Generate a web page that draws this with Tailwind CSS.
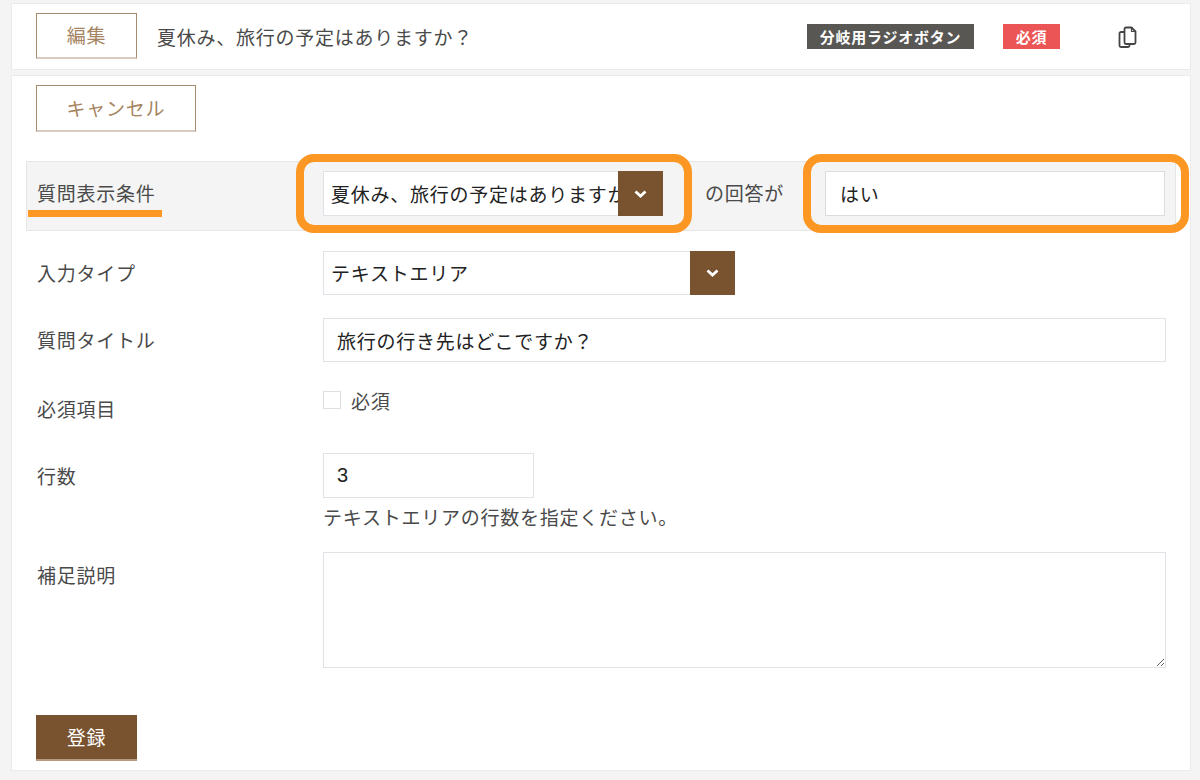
<!DOCTYPE html>
<html lang="ja">

<head>
    <meta charset="UTF-8">
    <meta name="viewport" content="width=device-width, initial-scale=1.0">
    <title>質問編集</title>
    <script src="https://cdn.jsdelivr.net/npm/@tailwindcss/browser@4"></script>
</head>

<body class="bg-[#f4f4f4] h-[780px] overflow-hidden font-['Noto_Sans_CJK_JP','Liberation_Sans',sans-serif] text-[19px] leading-[26px] tracking-[0.75px] text-[#4a4a4a]">
    <div class="relative w-[1200px] h-[780px] pl-[11px] pt-[3px]">
        <!-- question header -->
        <div class="w-[1180px] h-[67px] bg-white border border-[#ebebeb] flex items-center pl-[24px]">
            <button class="mb-[2px] w-[101px] h-[46px] border border-[#a58a6e] border-b-2 border-b-[#d8ccc0] text-[#a5845f] tracking-[0.75px]">編集</button>
            <p class="ml-[20px] w-[650px]">夏休み、旅行の予定はありますか？</p>
            <span class="w-[167px] h-[25px] bg-[#595754] text-white text-[15px] font-bold flex items-center justify-center">分岐用ラジオボタン</span>
            <span class="ml-[29px] w-[57px] h-[25px] bg-[#ec5555] text-white text-[15px] font-bold flex items-center justify-center">必須</span>
            <svg class="ml-[58px]" width="20" height="22" viewBox="0 0 20 22" fill="none" stroke="#444" stroke-width="1.800" stroke-linejoin="round">
                <path d="M6 6H3a1.500 1.500 0 0 0-1.500 1.500v12A1.500 1.500 0 0 0 3 21h7a1.500 1.500 0 0 0 1.500-1.500V18" />
                <path d="M13.500 1.500H8A1.500 1.500 0 0 0 6.500 3v13.500A1.500 1.500 0 0 0 8 18h8a1.500 1.500 0 0 0 1.500-1.500V5.500z" />
                <path d="M13.500 1.500v4h4" stroke-width="1.200" />
            </svg>
        </div>

        <!-- edit form -->
        <div class="mt-[5px] w-[1180px] h-[696px] bg-white border border-[#ebebeb] pl-[14px] pt-[9px]">
            <button class="ml-[10px] w-[160px] h-[47px] border border-[#a58a6e] border-b-2 border-b-[#d8ccc0] text-[#a5845f] tracking-[0.75px]">キャンセル</button>

            <div class="mt-[29px] w-[1150px] h-[70px] bg-[#f4f4f4] border border-[#e6e6e6] flex items-start pt-[9px] pl-[10px]">
                <label class="w-[286px] mt-[9px] text-[#4a4a4a]">質問表示条件</label>
                <div class="relative w-[340px] h-[45px]">
                    <select class="appearance-none w-full h-full bg-white border border-[#dfe3e8] pl-[7px] pr-0 text-[#222] tracking-[0.75px]">
                        <option>夏休み、旅行の予定はありますか？</option>
                    </select>
                    <span class="absolute right-0 top-0 w-[45px] h-[45px] bg-[#79532f] flex items-center justify-center">
                        <svg width="13" height="8" viewBox="0 0 13 8" fill="none" stroke="#fff" stroke-width="2.800">
                            <path d="M1.500 1.500 6.500 6l5-4.500" />
                        </svg>
                    </span>
                </div>
                <span class="ml-[42px] mt-[9px] w-[120px]">の回答が</span>
                <input type="text" value="はい" class="w-[340px] h-[45px] bg-white border border-[#dcdcdc] px-[14px] text-[#222] tracking-[0.75px]">
            </div>

            <div class="mt-[20px] flex pl-[11px]">
                <label class="w-[286px] mt-[9px]">入力タイプ</label>
                <div class="relative w-[412px] h-[44px]">
                    <select class="appearance-none w-full h-full bg-white border border-[#dfe3e8] pl-[7px] text-[#222] tracking-[0.75px]">
                        <option>テキストエリア</option>
                    </select>
                    <span class="absolute right-0 top-0 w-[45px] h-[44px] bg-[#79532f] flex items-center justify-center">
                        <svg width="13" height="8" viewBox="0 0 13 8" fill="none" stroke="#fff" stroke-width="2.800">
                            <path d="M1.500 1.500 6.500 6l5-4.500" />
                        </svg>
                    </span>
                </div>
            </div>

            <div class="mt-[23px] flex pl-[11px]">
                <label class="w-[286px] mt-[9px]">質問タイトル</label>
                <input type="text" value="旅行の行き先はどこですか？" class="w-[843px] h-[44px] bg-white border border-[#dfe3e8] px-[13px] text-[#222] tracking-[0.75px]">
            </div>

            <div class="mt-[29px] h-[62px] flex pl-[11px]">
                <label class="w-[286px] mt-[5px]">必須項目</label>
                <div class="flex items-start">
                    <span class="w-[18px] h-[18px] bg-white border border-[#dfdfdf]"></span>
                    <span class="ml-[10px] -mt-[3px]">必須</span>
                </div>
            </div>

            <div class="flex pl-[11px]">
                <label class="w-[286px] mt-[10px]">行数</label>
                <div>
                    <input type="text" value="3" class="block w-[211px] h-[45px] bg-white border border-[#dfe3e8] px-[13px] font-['Liberation_Sans',sans-serif] text-[20px] text-[#222]">
                    <p class="mt-[6px] h-[28px]">テキストエリアの行数を指定ください。</p>
                </div>
            </div>

            <div class="mt-[20px] flex pl-[11px]">
                <label class="w-[286px] mt-[10px]">補足説明</label>
                <textarea class="block w-[843px] h-[116px] bg-white border border-[#dfe3e8]"></textarea>
            </div>

            <button class="mt-[47px] ml-[10px] w-[101px] h-[46px] bg-[#79532f] border-b-2 border-b-[#b89a7e] text-white tracking-[0.75px]">登録</button>
        </div>

        <!-- annotation marks drawn over the form -->
        <div class="absolute left-[28px] top-[210px] w-[134px] h-[7px] bg-[#fb9722]"></div>
        <div class="absolute left-[296px] top-[154px] w-[396px] h-[79px] border-[8px] border-[#fb9722] rounded-[18px]"></div>
        <div class="absolute left-[803px] top-[154px] w-[386px] h-[79px] border-[8px] border-[#fb9722] rounded-[18px]"></div>
    </div>
</body>

</html>
